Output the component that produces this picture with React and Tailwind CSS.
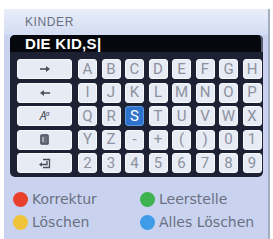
import React from 'react';

const rows = [
  ['A', 'B', 'C', 'D', 'E', 'F', 'G', 'H'],
  ['I', 'J', 'K', 'L', 'M', 'N', 'O', 'P'],
  ['Q', 'R', 'S', 'T', 'U', 'V', 'W', 'X'],
  ['Y', 'Z', '-', '+', '(', ')', '0', '1'],
  ['2', '3', '4', '5', '6', '7', '8', '9'],
];

const ArrowRight = () => (
  <svg width="12" height="8" viewBox="0 0 12 8">
    <path d="M1 4h8" stroke="#4b505c" strokeWidth="1.6" />
    <path d="M7 1l4 3-4 3z" fill="#4b505c" />
  </svg>
);

const ArrowLeft = () => (
  <svg width="12" height="8" viewBox="0 0 12 8">
    <path d="M3 4h8" stroke="#4b505c" strokeWidth="1.6" />
    <path d="M5 1L1 4l4 3z" fill="#4b505c" />
  </svg>
);

const CaseIcon = () => (
  <span className="flex items-start text-[#4b505c] italic leading-none">
    <span className="text-[12px]">A</span>
    <span className="text-[7px] -ml-[1px]">a</span>
  </span>
);

const ClearIcon = () => (
  <svg width="9" height="11" viewBox="0 0 9 11">
    <rect x="0.8" y="0.8" width="7.4" height="9.4" rx="1" fill="#6a6f7b" stroke="#4b505c" strokeWidth="1.2" />
    <path d="M3 3v5" stroke="#c7ccd6" strokeWidth="1.2" />
  </svg>
);

const EnterIcon = () => (
  <svg width="13" height="11" viewBox="0 0 13 11">
    <path d="M5 1.5h6.5v8H5" fill="none" stroke="#4b505c" strokeWidth="1.3" />
    <path d="M9 3v3.5H3" fill="none" stroke="#4b505c" strokeWidth="1.4" />
    <path d="M4 4.3L1 6.5l3 2.2z" fill="#4b505c" />
  </svg>
);

const wide = [<ArrowRight />, <ArrowLeft />, <CaseIcon />, <ClearIcon />, <EnterIcon />];

const legend = [
  ['bg-[#e8402c]', 'Korrektur'],
  ['bg-[#3fb34f]', 'Leerstelle'],
  ['bg-[#f0c43a]', 'Löschen'],
  ['bg-[#3f9be6]', 'Alles Löschen'],
];

const App = () => {
  return (
    <div className="w-[273px] h-[239px] bg-white pt-[9px] pl-[4px] overflow-hidden">
      <div className="w-[266px] h-[230px] bg-[#c9d3ef] rounded-tl-[3px] border-r-2 border-[#a4acbf] flex flex-col">
        <div
          className="h-[26px] bg-gradient-to-b from-[#e9eef9] to-[#d3dcf2] pl-[21px] pt-[7px] text-[12px] leading-none tracking-[0.6px] text-[#697082]"
          style={{ fontFamily: '"Liberation Sans", Arial, sans-serif' }}
        >
          KINDER
        </div>

        <div className="ml-[6px] w-[253px] bg-[#1c2233] rounded-[5px] pb-[4px]">
          <div
            className="h-[17px] bg-[#06080d] rounded-t-[5px] border-r-2 border-[#5a6070] pl-[15px] flex items-center text-white font-bold text-[15px] tracking-[0.3px] leading-none"
            style={{ fontFamily: '"Liberation Sans", Arial, sans-serif' }}
          >
            DIE KID,S|
          </div>

          <div className="pt-[7px] pl-[7px] flex flex-col gap-[3.5px]">
            {rows.map((row, r) => (
              <div key={r} className="flex h-[20px]">
                <div className="w-[55px] h-[20px] rounded-[3px] bg-[#e7ebf4] border border-[#f6f8fc] flex items-center justify-center">
                  {wide[r]}
                </div>
                <div className="flex gap-[4.5px] ml-[6px]">
                  {row.map((k) => (
                    <div
                      key={k}
                      className={
                        k === 'S'
                          ? 'w-[19px] h-[20px] rounded-[3px] bg-[#2f74cc] border border-[#5a97e0] flex items-center justify-center text-white text-[15px] leading-none'
                          : 'w-[19px] h-[20px] rounded-[3px] bg-[#e7ebf4] border border-[#f6f8fc] flex items-center justify-center text-[#8d92a1] text-[15px] leading-none'
                      }
                      style={{ fontFamily: 'Roboto, "Liberation Sans", sans-serif' }}
                    >
                      {k}
                    </div>
                  ))}
                </div>
              </div>
            ))}
          </div>
        </div>

        <div
          className="grid grid-cols-[127px_1fr] gap-y-[3px] pt-[12px] pl-[9px] text-[14px] leading-none text-[#6a7082]"
          style={{ fontFamily: '"DejaVu Sans", sans-serif' }}
        >
          {legend.map(([c, t]) => (
            <div key={t} className="flex items-center h-[20px] gap-[4px]">
              <span className={`w-[15px] h-[15px] rounded-full ${c}`} />
              <span>{t}</span>
            </div>
          ))}
        </div>
      </div>
    </div>
  );
};

export default App;
